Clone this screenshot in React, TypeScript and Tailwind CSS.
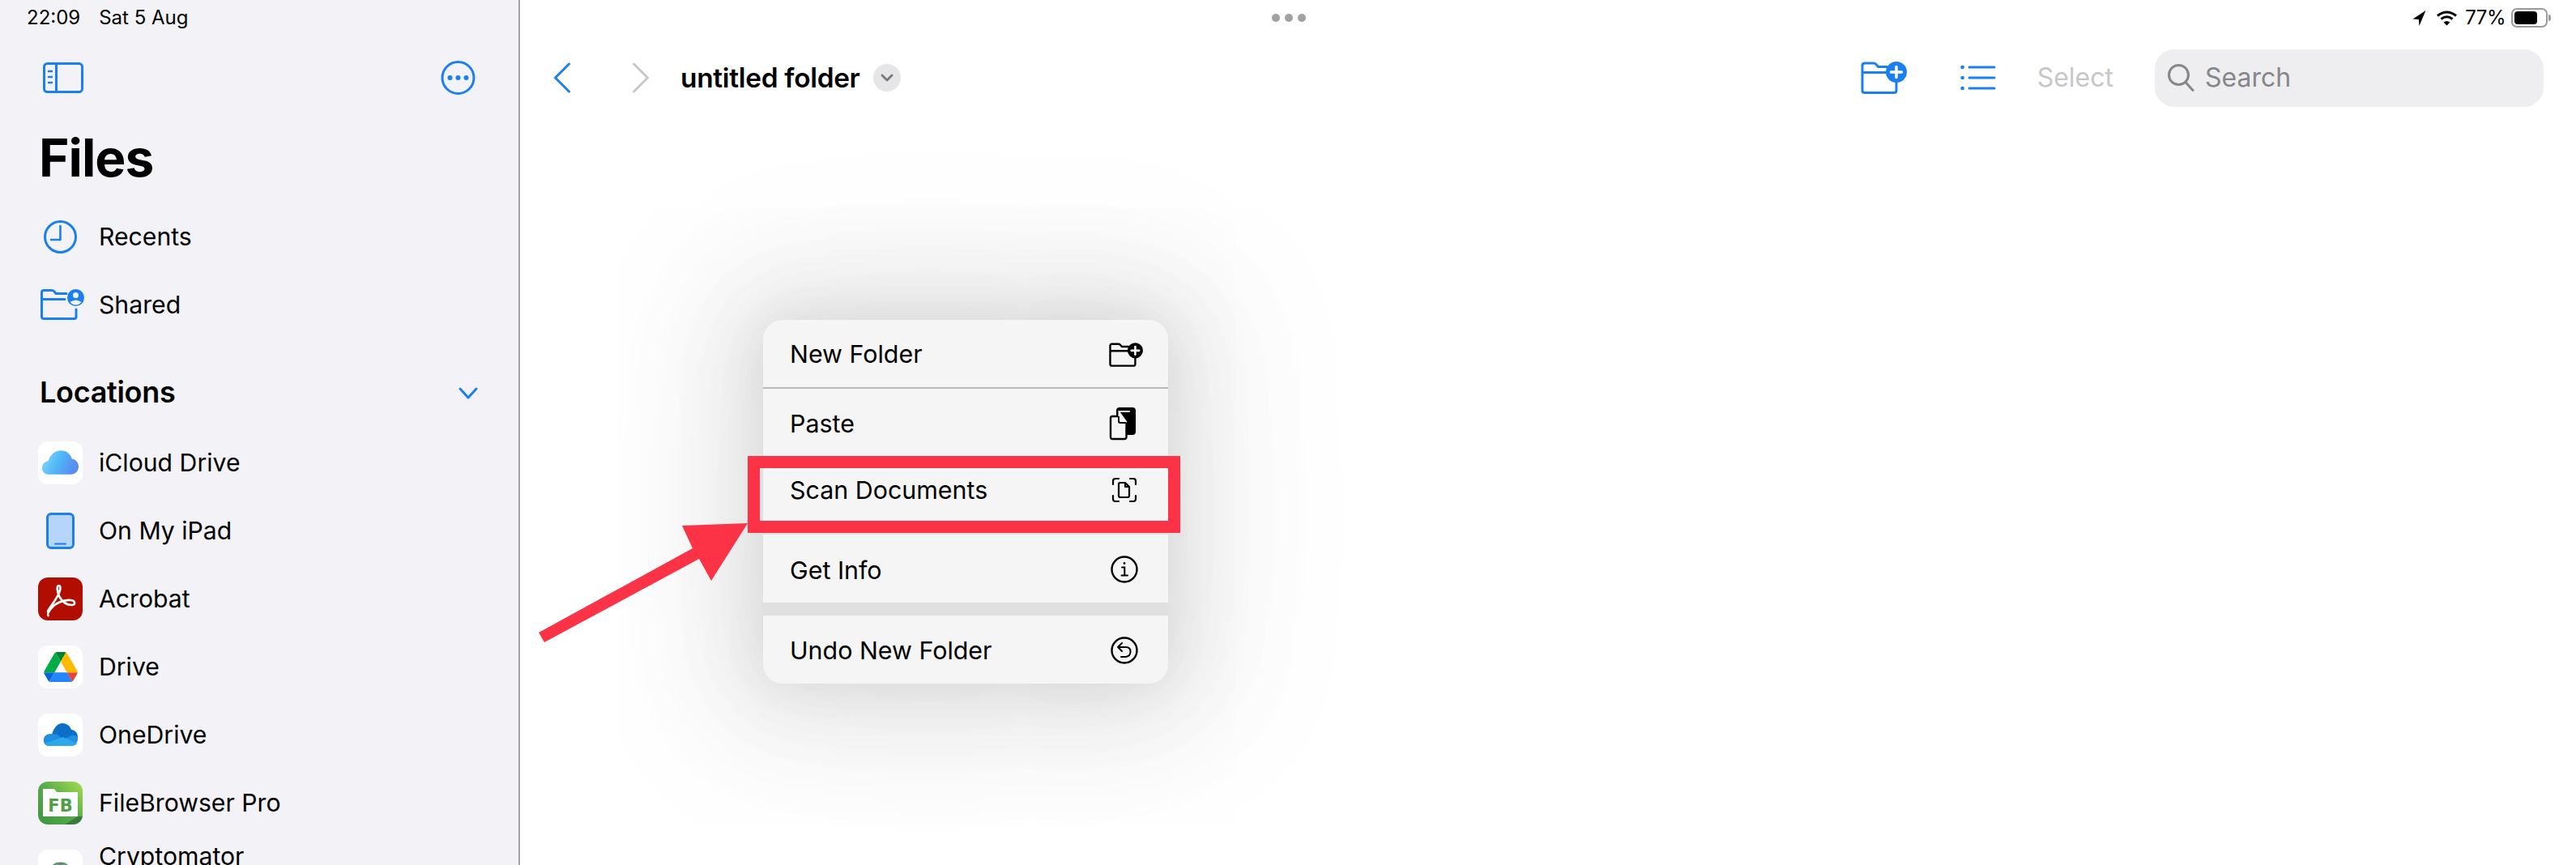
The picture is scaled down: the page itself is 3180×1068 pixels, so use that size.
import React from "react";

const BLUE = "#1a7ff0";

function Row({ icon, label, up }: { icon: React.ReactNode; label: string; up?: boolean }) {
  return (
    <div className="flex h-[84px] shrink-0 items-center">
      <div className="flex w-[122px] shrink-0 pl-[47px]">{icon}</div>
      <span className={up ? "-translate-y-[18px] text-[30.2px] leading-[38px] whitespace-nowrap text-black" : "text-[30.2px] leading-[38px] whitespace-nowrap text-black"}>{label}</span>
    </div>
  );
}

function Tile({ children, cls }: { children: React.ReactNode; cls?: string }) {
  return (
    <div className={"flex h-[53px] w-[55px] items-center justify-center overflow-hidden rounded-[12px] " + (cls ?? "bg-white")}>{children}</div>
  );
}

function FolderPlus({ color, w, h, sw }: { color: string; w: number; h: number; sw: number }) {
  return (
    <svg width={w} height={h} viewBox="0 0 57 40" fill="none">
      <path d="M44 26v9.500q0 3-3 3H5q-3 0-3-3V5q0-3 3-3h11q2 0 3.500 2l2 2.500h11M2 13.500h29" stroke={color} strokeWidth={sw * 57 / w} strokeLinecap="round" strokeLinejoin="round" />
      <circle cx="44" cy="13" r="13" fill={color} />
      <path d="M44 6.500v13M37.500 13h13" stroke="#fff" strokeWidth="3.500" strokeLinecap="round" />
    </svg>
  );
}

function MenuItem({ label, icon, cls }: { label: string; icon: React.ReactNode; cls: string }) {
  return (
    <div className={"flex shrink-0 items-start justify-between pl-[33px] pr-[31px] " + cls}>
      <span className="text-[30.4px] leading-[38px] whitespace-nowrap text-black">{label}</span>
      <div className="w-[42px] shrink-0">{icon}</div>
    </div>
  );
}

export default function App() {
  return (
    <div className="flex h-[1068px] w-[3180px] overflow-hidden bg-white font-['Inter',sans-serif] text-black">
      {/* Sidebar */}
      <aside className="flex h-[1068px] w-[642px] shrink-0 flex-col overflow-hidden border-r-2 border-[#a3a3a6] bg-[#f2f2f7]">
        <div className="flex h-[44px] shrink-0 items-center gap-[23px] pl-[33px] text-[24px] text-black">
          <span>22:09</span>
          <span>Sat 5 Aug</span>
        </div>
        <div className="flex h-[104px] shrink-0 items-center justify-between pl-[53px] pr-[53px]">
          <svg width="50" height="38" viewBox="0 0 50 38" fill="none" stroke={BLUE} strokeWidth="3">
            <rect x="1.500" y="1.500" width="47" height="35" rx="4" />
            <path d="M16.500 2v34" />
            <path d="M6 11h6M6 18h6M6 25h6" strokeWidth="2.500" />
          </svg>
          <svg width="43" height="42" viewBox="0 0 43 42" fill="none">
            <circle cx="21.500" cy="21" r="19.500" stroke={BLUE} strokeWidth="3" />
            <circle cx="11.500" cy="21" r="3" fill={BLUE} />
            <circle cx="21.500" cy="21" r="3" fill={BLUE} />
            <circle cx="31.500" cy="21" r="3" fill={BLUE} />
          </svg>
        </div>
        <div className="flex h-[102px] shrink-0 items-start pl-[48px]">
          <span className="text-[64px] leading-[94px] font-bold tracking-[-1px]">Files</span>
        </div>
        <div className="flex h-[84px] shrink-0 items-center">
          <div className="w-[122px] shrink-0 pl-[54px]">
            <svg width="41" height="41" viewBox="0 0 41 41" fill="none" stroke={BLUE} strokeWidth="3" strokeLinecap="round" strokeLinejoin="round">
              <circle cx="20.500" cy="20.500" r="19" />
              <path d="M20.500 7v17H9" strokeWidth="2.600" />
            </svg>
          </div>
          <span className="text-[30.2px] leading-[38px]">Recents</span>
        </div>
        <div className="flex h-[83px] shrink-0 items-center">
          <div className="w-[122px] shrink-0 pl-[50px]">
            <svg width="54" height="38" viewBox="0 0 54 38" fill="none">
              <path d="M44 25v9q0 2.500-2.500 2.500H4Q1.500 36.500 1.500 34V4Q1.500 1.500 4 1.500h10q2 0 3 1.500l2 2.500h13M1.500 12.500H30" stroke={BLUE} strokeWidth="3" strokeLinecap="round" strokeLinejoin="round" />
              <circle cx="43.500" cy="10.500" r="10.500" fill={BLUE} />
              <circle cx="43.500" cy="7.500" r="3.500" fill="#f2f2f7" />
              <path d="M36.500 16q7-5 14 0-3 3.500-7 3.500t-7-3.500" fill="#f2f2f7" />
            </svg>
          </div>
          <span className="text-[30.2px] leading-[38px]">Shared</span>
        </div>
        <div className="flex h-[112px] shrink-0 items-start justify-between pl-[49px] pr-[50px] pt-[48px]">
          <span className="text-[36px] leading-[38px] font-semibold tracking-[-0.3px]">Locations</span>
          <svg className="mt-[13px]" width="24" height="16" viewBox="0 0 24 16" fill="none" stroke={BLUE} strokeWidth="3" strokeLinecap="round" strokeLinejoin="round">
            <path d="M2 2l10 11L22 2" />
          </svg>
        </div>

        <Row
          label="iCloud Drive"
          icon={
            <Tile>
              <svg width="45" height="30" viewBox="0 0 44 29">
                <defs>
                  <linearGradient id="ic" x1="0" y1="0" x2="1" y2="0.3">
                    <stop offset="0" stopColor="#8adcfb" />
                    <stop offset="0.55" stopColor="#4fb6f7" />
                    <stop offset="1" stopColor="#5a8df0" />
                  </linearGradient>
                </defs>
                <path d="M8 29C3 29 0 25.500 0 21c0-5 3.500-8 7.500-8.300C9.500 5 15.500 0 23 0c6 0 11 4 13 10 4.500.5 8 4.500 8 9.500 0 5.500-4 9.500-9 9.500z" fill="url(#ic)" />
              </svg>
            </Tile>
          }
        />
        <Row
          label="On My iPad"
          icon={
            <div className="flex h-[53px] w-[55px] items-center justify-center">
              <svg width="35" height="45" viewBox="0 0 35 45">
                <rect x="1.500" y="1.500" width="32" height="42" rx="4.500" fill="#b5d5fb" stroke={BLUE} strokeWidth="3" />
                <path d="M11 38.500h13" stroke={BLUE} strokeWidth="2" strokeLinecap="round" />
              </svg>
            </div>
          }
        />
        <Row
          label="Acrobat"
          icon={
            <Tile cls="bg-[#b10d00]">
              <svg width="55" height="53" viewBox="0 0 55 53" fill="none">
                <path d="M12 42c2-5 9-12 14-23 2-5 2-9-.5-9s-2.500 7 1 14c4 7 9 10 15 10 5 0 5-5-1-6-9-1-20 4-25 11-3 4-4 7-3 8" stroke="#fff" strokeWidth="2.600" strokeLinecap="round" strokeLinejoin="round" />
              </svg>
            </Tile>
          }
        />
        <Row
          label="Drive"
          icon={
            <Tile>
              <svg width="42" height="37" viewBox="0 0 87.300 78">
                <path d="m6.600 66.850 3.850 6.650c.8 1.400 1.950 2.500 3.300 3.300l13.750-23.800h-27.500c0 1.550.4 3.100 1.200 4.500z" fill="#0066da" />
                <path d="m43.650 25-13.750-23.800c-1.350.8-2.500 1.900-3.300 3.300l-25.400 44a9.060 9.060 0 0 0 -1.200 4.500h27.500z" fill="#00ac47" />
                <path d="m73.550 76.800c1.350-.8 2.500-1.900 3.300-3.300l1.600-2.750 7.650-13.250c.8-1.400 1.200-2.950 1.200-4.500h-27.502l5.852 11.500z" fill="#ea4335" />
                <path d="m43.650 25 13.750-23.800c-1.350-.8-2.900-1.200-4.500-1.200h-18.500c-1.600 0-3.150.45-4.500 1.200z" fill="#00832d" />
                <path d="m59.800 53h-32.300l-13.750 23.800c1.350.8 2.900 1.200 4.500 1.200h50.800c1.600 0 3.150-.45 4.500-1.200z" fill="#2684fc" />
                <path d="m73.400 26.500-12.700-22c-.8-1.400-1.950-2.500-3.300-3.300l-13.750 23.800 16.150 28h27.450c0-1.550-.4-3.100-1.200-4.500z" fill="#ffba00" />
              </svg>
            </Tile>
          }
        />
        <Row
          label="OneDrive"
          icon={
            <Tile>
              <svg width="42" height="28" viewBox="0 0 42 28">
                <path d="M7 28c-4 0-7-3-7-7s3-7.500 7-7.500c1.500 0 2 .3 3 .8C12 6 17 0 23 0c5 0 9.500 3 11 8 4.500.3 8 4 8 9 0 6-4.500 11-9 11z" fill="#0b6fc8" />
                <path d="M7 28c-4 0-7-3-7-7 0-3 2-6 5-7 5-2 11-1 13 1l6 5 10-5c4-1 8 1 8 4 0 5-4 9-9 9z" fill="#1d90e0" />
                <path d="M7 28c-3 0-5-1-6-3l23-8 17 8c-1 2-4 3-8 3z" fill="#2ea8ea" />
              </svg>
            </Tile>
          }
        />
        <Row
          label="FileBrowser Pro"
          icon={
            <Tile cls="bg-gradient-to-tr from-[#3f9440] via-[#55ab4a] to-[#a6dc50]">
              <svg width="55" height="53" viewBox="0 0 55 53">
                <path d="M6 9h14l3 4h26v30H6z" fill="#fff" />
                <path d="M33 53l16-10h6v4q0 6-6 6z" fill="#3a7d3a" />
                <text x="27.500" y="37" textAnchor="middle" fontSize="21" fontWeight="800" fill="#4f9f45" fontFamily="'DejaVu Sans',sans-serif">FB</text>
              </svg>
            </Tile>
          }
        />
        <Row
          up
          label="Cryptomator"
          icon={
            <Tile>
              <svg width="55" height="53" viewBox="0 0 55 53">
                <path d="M15 26c0-14 25-14 25 0v14H15z" fill="#747c76" />
                <path d="M19 18q4-2 8 1l-3 3q-4 0-5-4M36 18q-4-2-8 1l3 3q4 0 5-4" fill="#49b06d" />
              </svg>
            </Tile>
          }
        />
      </aside>

      {/* Main */}
      <main className="relative flex h-[1068px] flex-1 flex-col overflow-hidden bg-white">
        <div className="flex h-[44px] shrink-0 items-center pr-[31px]">
          <div className="flex flex-1 justify-center gap-[6px] pr-[438px]">
            <div className="h-[10px] w-[10px] rounded-full bg-[#a1a1a1]" />
            <div className="h-[10px] w-[10px] rounded-full bg-[#a1a1a1]" />
            <div className="h-[10px] w-[10px] rounded-full bg-[#a1a1a1]" />
          </div>
          <div className="flex items-center">
            <svg width="17" height="21" viewBox="0 0 16 19"><path d="M15.500.5L.5 10.500l7 .5.5 7.500z" fill="#000" /></svg>
            <svg className="ml-[12px]" width="27" height="20" viewBox="0 0 27 20" fill="none" stroke="#000" strokeWidth="3" strokeLinecap="butt">
              <path d="M2 7.500q11.500-9 23 0M6.500 11.500q7-5.500 14 0" />
              <path d="M13.500 19.500l-4-4q4-3 8 0z" fill="#000" stroke="none" />
            </svg>
            <span className="ml-[9px] text-[24px] leading-none tracking-[-0.5px]">77%</span>
            <div className="ml-[7px] flex h-[24px] w-[45px] items-center rounded-[7px] border-2 border-[#9b9b9b] p-[2px]">
              <div className="h-full w-[77%] rounded-[4px] bg-black" />
            </div>
            <div className="ml-[1px] h-[8px] w-[3px] rounded-r-full bg-[#9b9b9b]" />
          </div>
        </div>

        <div className="flex h-[104px] shrink-0 items-center">
          <svg className="ml-[41px]" width="22" height="38" viewBox="0 0 22 38" fill="none" stroke={BLUE} strokeWidth="3" strokeLinecap="round" strokeLinejoin="round">
            <path d="M19.500 2L2.500 19l17 17" />
          </svg>
          <svg className="ml-[75px]" width="22" height="38" viewBox="0 0 22 38" fill="none" stroke="#c7c7c9" strokeWidth="3" strokeLinecap="round" strokeLinejoin="round">
            <path d="M2.500 2l17 17-17 17" />
          </svg>
          <span className="ml-[38px] text-[33.4px] leading-[40px] font-semibold tracking-[-0.3px] whitespace-nowrap">untitled folder</span>
          <div className="ml-[16px] flex h-[34px] w-[34px] items-center justify-center rounded-full bg-[#e6e6e8]">
            <svg width="18" height="12" viewBox="0 0 18 12" fill="none" stroke="#77777c" strokeWidth="2.800" strokeLinecap="round" strokeLinejoin="round">
              <path d="M3 3l6 6 6-6" />
            </svg>
          </div>
          <div className="flex flex-1 items-center justify-end pr-[40px]">
            <FolderPlus color={BLUE} w={57} h={40} sw={3} />
            <svg className="ml-[66px]" width="44" height="32" viewBox="0 0 44 32" fill="none" stroke={BLUE} strokeWidth="3" strokeLinecap="round">
              <path d="M11 3h31M11 16h31M11 29h31" />
              <path d="M2.500 3h.2M2.500 16h.2M2.500 29h.2" strokeWidth="4.500" />
            </svg>
            <span className="ml-[51px] text-[32px] leading-[38px] text-[#c7c7c9]">Select</span>
            <div className="ml-[51px] flex h-[71px] w-[480px] items-center rounded-[24px] bg-[#eeeef0] pl-[16px]">
              <svg width="33" height="34" viewBox="0 0 33 34" fill="none" stroke="#86868b" strokeWidth="3" strokeLinecap="round">
                <circle cx="13.500" cy="13.500" r="12" />
                <path d="M22.500 23l8.500 9.500" />
              </svg>
              <span className="ml-[13px] text-[32px] leading-[38px] text-[#86868b]">Search</span>
            </div>
          </div>
        </div>

        {/* Context menu */}
        <div className="absolute left-[300px] top-[395px] flex h-[449px] w-[500px] flex-col overflow-hidden rounded-[24px] bg-[#f5f5f5] shadow-[0_0_60px_rgba(0,0,0,0.05),0_0_110px_20px_rgba(0,0,0,0.06),0_0_160px_50px_rgba(0,0,0,0.05),0_0_200px_90px_rgba(0,0,0,0.04)]">
          <MenuItem
            label="New Folder"
            cls="h-[83px] pt-[23px]"
            icon={<div className="pt-[5px]"><FolderPlus color="#000" w={42} h={30} sw={2.400} /></div>}
          />
          <div className="h-[2px] shrink-0 bg-[#b9b9bb]" />
          <MenuItem
            label="Paste"
            cls="h-[86px] pt-[24px]"
            icon={
              <svg width="34" height="42" viewBox="0 0 34 42" fill="none" className="-mt-[2px]">
                <rect x="9" y="1" width="24" height="34" rx="4" fill="#000" />
                <path d="M14 6h11" stroke="#f5f5f5" strokeWidth="2" strokeLinecap="round" />
                <path d="M4.500 12h10l7 7v18.500q0 2.500-2.500 2.500H4.500Q2 40 2 37.500v-23Q2 12 4.500 12z" fill="#f5f5f5" stroke="#000" strokeWidth="2.400" />
                <path d="M12 5l10 14h-8q-2 0-2-2z" fill="#f5f5f5" stroke="#f5f5f5" />
                <path d="M12 12v6q0 2 2 2h7" stroke="#000" strokeWidth="2" />
              </svg>
            }
          />
          <MenuItem
            label="Scan Documents"
            cls="h-[91px] pt-[20px]"
            icon={
              <svg width="32" height="32" viewBox="0 0 32 32" fill="none" stroke="#000" strokeWidth="2.200" strokeLinecap="round" strokeLinejoin="round" className="mt-[3px] ml-[3px]">
                <path d="M2 9V5q0-3 3-3h4M23 2h4q3 0 3 3v4M30 23v4q0 3-3 3h-4M9 30H5q-3 0-3-3v-4" />
                <path d="M11 7h6l5 5v11q0 2-2 2h-9q-2 0-2-2V9q0-2 2-2zM17 7v5h5" />
              </svg>
            }
          />
          <div className="h-[3px] shrink-0 bg-[#e0e0e0]" />
          <MenuItem
            label="Get Info"
            cls="h-[84px] pt-[25px]"
            icon={
              <svg width="34" height="34" viewBox="0 0 34 34" fill="none" stroke="#000" strokeWidth="2.400" strokeLinecap="round" className="mt-[1px] ml-[2px]">
                <circle cx="17" cy="17" r="15.500" />
                <circle cx="17" cy="9.500" r="1.400" fill="#000" stroke="none" />
                <path d="M14 14.500h3.300V24M13.500 24.500h7.500" strokeWidth="2" />
              </svg>
            }
          />
          <div className="h-[16px] shrink-0 bg-[#e0e0e0]" />
          <MenuItem
            label="Undo New Folder"
            cls="h-[83px] pt-[24px]"
            icon={
              <svg width="34" height="34" viewBox="0 0 34 34" fill="none" stroke="#000" strokeWidth="2.400" strokeLinecap="round" strokeLinejoin="round" className="mt-[2px] ml-[2px]">
                <circle cx="17" cy="17" r="15.500" />
                <path d="M14 8l-5 5 5 5M9.500 13H19q5.500 0 5.500 5.500T19 25h-6" strokeWidth="2" />
              </svg>
            }
          />
        </div>

        {/* Annotation */}
        <div className="absolute left-[281px] top-[563px] h-[95px] w-[534px] border-[15px] border-[#fc3246]" />
        <svg className="absolute left-0 top-[600px]" width="300" height="210" viewBox="0 0 300 210">
          <polygon points="23,181 213,77 200,49 281,46 236,117 221,90 30,193" fill="#fc3246" />
        </svg>
      </main>
    </div>
  );
}
